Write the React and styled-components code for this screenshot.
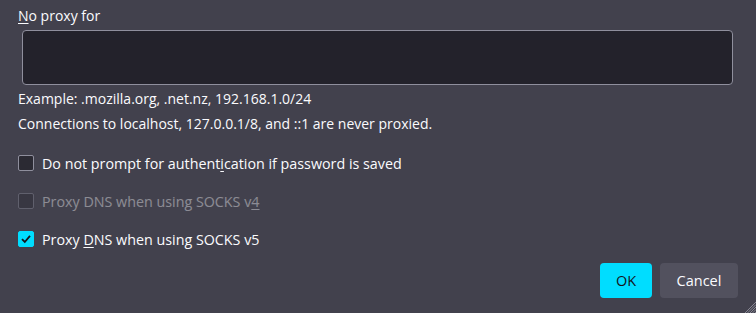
import styled, { createGlobalStyle } from "styled-components";

const GlobalStyle = createGlobalStyle`
  html, body {
    margin: 0;
    padding: 0;
    background: #42414d;
  }
  body {
    font-family: "Open Sans", "Noto Sans", sans-serif;
    color: #fbfbfe;
  }
`;

const Dialog = styled.div`
  position: relative;
  box-sizing: border-box;
  width: 756px;
  height: 313px;
  padding: 6px 18px 0 18px;
  background: #42414d;
  display: flex;
  flex-direction: column;
  overflow: hidden;
`;

const FieldLabel = styled.label`
  font-size: 14px;
  line-height: 20px;
`;

const Key = styled.u`
  text-decoration-thickness: 1px;
  text-underline-offset: 2px;
`;

const TextBox = styled.textarea`
  box-sizing: border-box;
  margin: 4px 5px 0 4px;
  height: 55px;
  background: #23222b;
  border: 1px solid #8f8f9d;
  border-radius: 4px;
  resize: none;
  outline: none;
  color: #fbfbfe;
`;

const Hint = styled.div`
  font-size: 14px;
  line-height: 20px;
  margin-top: ${(p) => p.$gap}px;
`;

const Options = styled.div`
  display: flex;
  flex-direction: column;
  gap: 14px;
  margin-top: 17px;
`;

const Option = styled.label`
  display: flex;
  align-items: center;
  gap: 8px;
  height: 24px;
  font-size: 14.3px;
  opacity: ${(p) => (p.$disabled ? 0.4 : 1)};
`;

const Box = styled.span`
  box-sizing: border-box;
  width: 16px;
  height: 16px;
  border-radius: 2px;
  border: 1px solid ${(p) => (p.$checked ? "#00ddff" : "#8f8f9d")};
  background: ${(p) => (p.$checked ? "#00ddff" : "#2b2a33")};
  display: flex;
  align-items: center;
  justify-content: center;
`;

const Buttons = styled.div`
  display: flex;
  justify-content: flex-end;
  gap: 8px;
  margin-top: 12px;
`;

const Button = styled.button`
  box-sizing: border-box;
  height: 35px;
  min-width: ${(p) => (p.$primary ? 52 : 78)}px;
  padding: 0 14px;
  border: none;
  border-radius: 4px;
  font-family: "Open Sans", "Noto Sans", sans-serif;
  font-size: 14.5px;
  background: ${(p) => (p.$primary ? "#00ddff" : "#52515e")};
  color: ${(p) => (p.$primary ? "#15141a" : "#fbfbfe")};
`;

const Grip = styled.svg`
  position: absolute;
  right: 0;
  bottom: 0;
`;

const Check = ({ checked }) => (
  <Box $checked={checked}>
    {checked && (
      <svg width="12" height="12" viewBox="0 0 12 12">
        <path d="M2 6.2 L4.8 9 L10 2.8" fill="none" stroke="#15141a" strokeWidth="1.8" />
      </svg>
    )}
  </Box>
);

export default function App() {
  return (
    <>
      <GlobalStyle />
      <Dialog>
        <FieldLabel>
          <Key>N</Key>o proxy for
        </FieldLabel>
        <TextBox />
        <Hint $gap={4}>Example: .mozilla.org, .net.nz, 192.168.1.0/24</Hint>
        <Hint $gap={5}>Connections to localhost, 127.0.0.1/8, and ::1 are never proxied.</Hint>
        <Options>
          <Option>
            <Check checked={false} />
            <span>
              Do not prompt for authent<Key>i</Key>cation if password is saved
            </span>
          </Option>
          <Option $disabled>
            <Check checked={false} />
            <span>
              Proxy DNS when using SOCKS v<Key>4</Key>
            </span>
          </Option>
          <Option>
            <Check checked />
            <span>
              Proxy <Key>D</Key>NS when using SOCKS v5
            </span>
          </Option>
        </Options>
        <Buttons>
          <Button $primary>OK</Button>
          <Button>Cancel</Button>
        </Buttons>
        <Grip width="12" height="12" viewBox="0 0 12 12">
          <path
            d="M12 1 L1 12 M12 3.5 L3.5 12 M12 6 L6 12 M12 8.5 L8.5 12 M12 11 L11 12"
            stroke="#9a99a6"
            strokeWidth="0.8"
          />
        </Grip>
      </Dialog>
    </>
  );
}
